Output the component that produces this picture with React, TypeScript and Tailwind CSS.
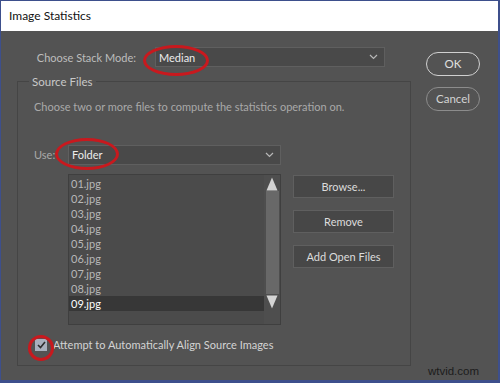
import React from "react";

const arrArchivos = ["01.jpg", "02.jpg", "03.jpg", "04.jpg", "05.jpg", "06.jpg", "07.jpg", "08.jpg", "09.jpg"];

const Chevron = () => (
  <svg width="9" height="6" viewBox="0 0 9 6" className="shrink-0">
    <path d="M1 1l3.5 3.5L8 1" fill="none" stroke="#b8b8b8" strokeWidth="1.2" />
  </svg>
);

const Dropdown = ({ strValor, className }: { strValor: string; className: string }) => (
  <div
    className={`flex items-center justify-between bg-[#494949] border border-[#5f5f5f] pl-[3px] pr-[6px] text-[#ececec] ${className}`}
  >
    <span>{strValor}</span>
    <Chevron />
  </div>
);

const Boton = ({ children }: { children: React.ReactNode }) => (
  <div className="h-[23px] w-[101px] flex items-center justify-center bg-[#474747] border border-[#5f5f5f] text-[#dcdcdc]">
    {children}
  </div>
);

const Elipse = ({ className }: { className: string }) => (
  <div className={`absolute rounded-[50%] border-[3px] border-[#c8191e] pointer-events-none ${className}`} />
);

export default function App() {
  return (
    <div
      className="w-[500px] h-[383px] bg-[#3d4f8c] pl-px pt-px pr-[2px] pb-[3px] text-[11px] leading-none"
      style={{ fontFamily: 'Lato, "Open Sans", sans-serif' }}
    >
      <div className="h-full flex flex-col">
        <div className="h-[30px] bg-white flex items-center pl-[8px] text-[12px] text-[#111]">
          Image Statistics
        </div>

        <div className="relative flex-1 bg-[#535353] flex pl-[16px] pt-[16px]">
          {/* columna principal */}
          <div className="w-[393px] flex flex-col">
            <div className="flex items-center h-[20px]">
              <span className="w-[121px] text-right pr-[2px] text-[#bdbdbd]">Choose Stack Mode:</span>
              <Dropdown strValor="Median" className="ml-[17px] w-[230px] h-[20px]" />
            </div>

            <fieldset className="mt-[9px] h-[290px] border border-[#454545] px-[16px] pb-0">
              <legend className="-ml-[5px] px-[3px] text-[#c8c8c8] text-[11.5px]">Source Files</legend>
              <p className="mt-[13px] text-[#a9a9a9]">Choose two or more files to compute the statistics operation on.</p>

              <div className="flex items-center mt-[33px] h-[20px]">
                <span className="w-[34px] text-[#a9a9a9]">Use:</span>
                <Dropdown strValor="Folder" className="w-[213px] h-[20px]" />
              </div>

              <div className="flex mt-[9px] pl-[34px]">
                <div className="w-[213px] h-[151px] bg-[#4b4b4b] border border-[#3f3f3f] flex">
                  <div className="flex-1 flex flex-col pt-[1px]">
                    {arrArchivos.map((strArchivo, index) => (
                      <div
                        key={index}
                        className={`h-[15px] flex items-center pl-[2px] ${
                          index === 8 ? "bg-[#373737] text-white" : "text-[#b8b8b8]"
                        }`}
                      >
                        {strArchivo}
                      </div>
                    ))}
                  </div>
                  <div className="w-[16px] flex flex-col items-center pt-[2px] bg-[#4e4e4e]">
                    <svg width="12" height="14" viewBox="0 0 12 14">
                      <path d="M6 0.5L11.5 13.5H0.5Z" fill="#d4d4d4" />
                    </svg>
                    <div className="w-[13px] h-[103px] bg-[#686868]" />
                    <svg width="12" height="14" viewBox="0 0 12 14" className="mt-[1px]">
                      <path d="M0.5 0.5H11.5L6 13.5Z" fill="#d4d4d4" />
                    </svg>
                  </div>
                </div>

                <div className="ml-[12px] flex flex-col gap-[12px] pt-[1px]">
                  <Boton>Browse...</Boton>
                  <Boton>Remove</Boton>
                  <Boton>Add Open Files</Boton>
                </div>
              </div>

              <div className="flex items-center mt-[14px]">
                <div className="w-[12px] h-[12px] ml-[1px] bg-[#a9b0bd] flex items-center justify-center">
                  <svg width="9" height="8" viewBox="0 0 9 8">
                    <path d="M1 4l2.5 2.5L8 1" fill="none" stroke="#2c2c2c" strokeWidth="1.6" />
                  </svg>
                </div>
                <span className="ml-[6px] text-[#d4d4d4]">Attempt to Automatically Align Source Images</span>
              </div>
            </fieldset>
          </div>

          {/* columna de botones */}
          <div className="ml-[16px] flex flex-col gap-[11px] pt-[5px]">
            <div className="w-[54px] h-[24px] rounded-full border-[1.5px] border-[#d0d0d0] flex items-center justify-center text-[#e0e0e0] text-[11.5px]">
              OK
            </div>
            <div className="w-[54px] h-[24px] rounded-full border border-[#8c8c8c] flex items-center justify-center text-[#d4d4d4] text-[11.5px]">
              Cancel
            </div>
          </div>

          <span className="absolute right-[19px] bottom-[3px] text-[11.5px] text-[#1c1c1c]" style={{ fontFamily: '"Liberation Sans", Arial, sans-serif' }}>
            wtvid.com
          </span>

          {/* anotaciones rojas */}
          <Elipse className="left-[142px] top-[14px] w-[66px] h-[31px]" />
          <Elipse className="left-[54px] top-[107px] w-[64px] h-[32px]" />
          <Elipse className="left-[27px] top-[304px] w-[26px] h-[26px]" />
        </div>
      </div>
    </div>
  );
}
